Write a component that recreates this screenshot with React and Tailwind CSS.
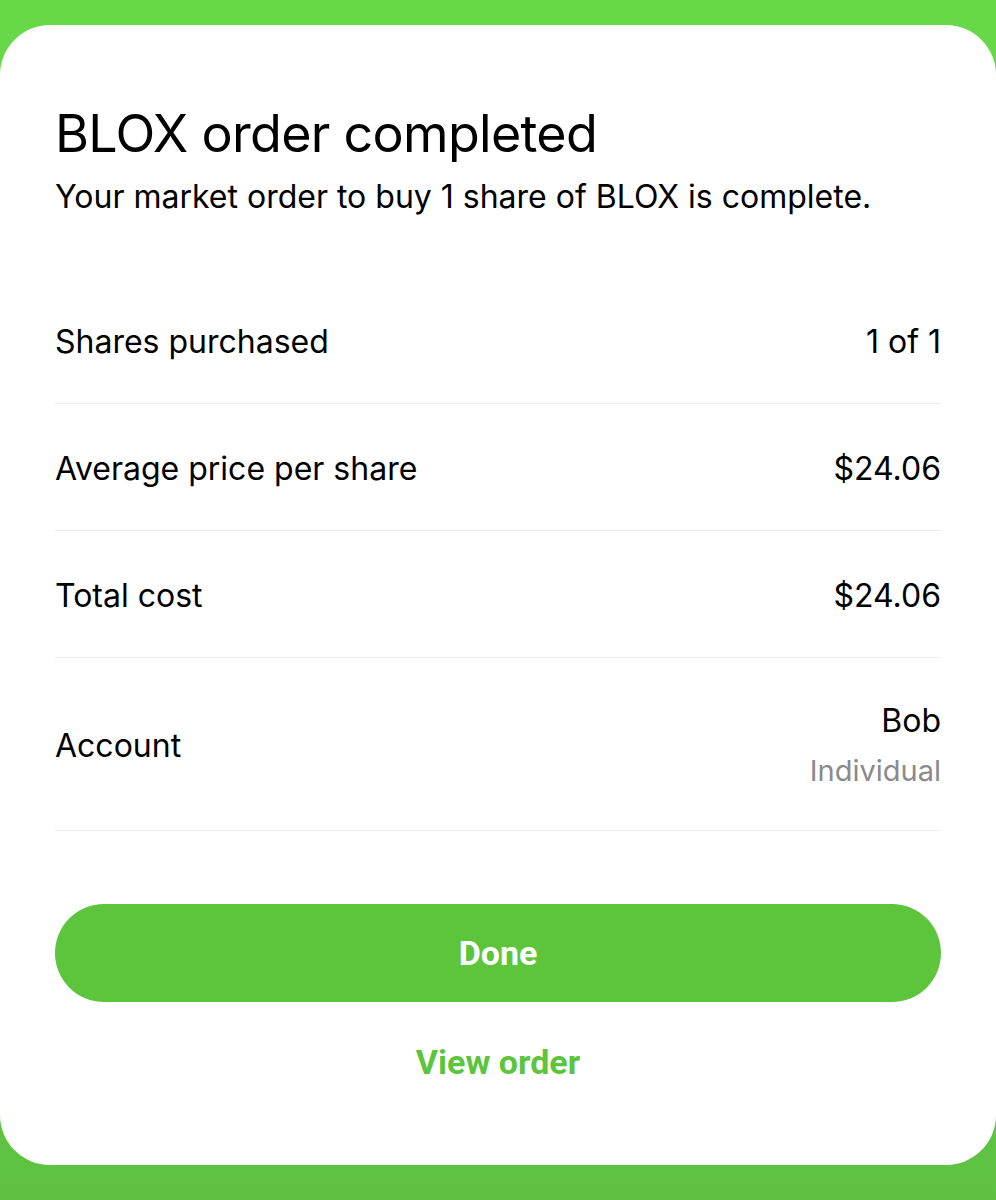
const rows = [
  { label: 'Shares purchased', value: '1 of 1' },
  { label: 'Average price per share', value: '$24.06' },
  { label: 'Total cost', value: '$24.06' },
];

export default function App() {
  return (
    <div className="min-h-[1200px] w-[996px] bg-gradient-to-b from-[#67d948] to-[#5ec142] pt-[25px] pb-[35px] font-['Inter',sans-serif]">
      <div className="h-[1140px] bg-white rounded-[50px] px-[55px] pt-[77px] flex flex-col">
        <h1 className="text-[52px] leading-[64px] text-black tracking-[-0.7px]">BLOX order completed</h1>
        <p className="mt-[11px] text-[32px] leading-[40px] text-black">Your market order to buy 1 share of BLOX is complete.</p>

        <div className="mt-[60px] flex flex-col">
          {rows.map((r) => (
            <div key={r.label} className="h-[127px] pt-[4px] flex items-center justify-between border-b border-[#ededed] text-[32px] text-black">
              <span>{r.label}</span>
              <span>{r.value}</span>
            </div>
          ))}
          <div className="h-[173px] pt-[4px] flex items-center justify-between border-b border-[#ededed] text-[32px]">
            <span className="text-black">Account</span>
            <div className="flex flex-col items-end">
              <span className="text-black leading-[50px]">Bob</span>
              <span className="text-[29px] text-[#8a8a8e] leading-[50px]">Individual</span>
            </div>
          </div>
        </div>

        <button className="mt-[73px] h-[98px] w-full rounded-full bg-[#5cc53c] text-white text-[34px] font-bold font-['Roboto',sans-serif]">
          Done
        </button>
        <button className="mt-[35px] h-[44px] text-[#5cc53c] text-[34px] font-bold font-['Roboto',sans-serif]">
          View order
        </button>
      </div>
    </div>
  );
}
